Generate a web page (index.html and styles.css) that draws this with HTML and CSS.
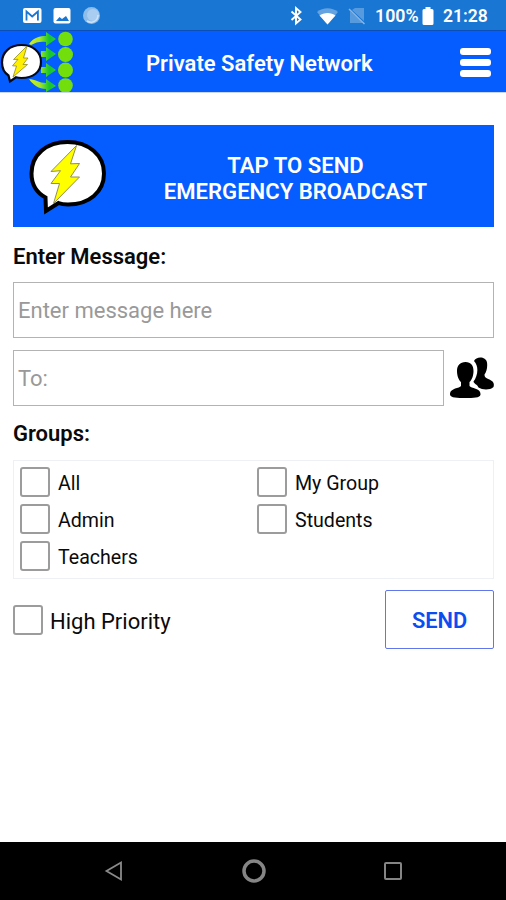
FILE: index.html
```html
<!DOCTYPE html>
<html lang="en">
<head>
<meta charset="utf-8">
<title>Private Safety Network</title>
<link rel="stylesheet" href="styles.css">
</head>
<body>
<div class="screen">
  <div class="status">
    <svg class="status-left" width="84" height="20" viewBox="0 0 84 20">
      <rect x="2" y="2" width="18.500" height="15" rx="2" fill="#fff"/>
      <path d="M5.500 14.500V5.500l5.700 5 5.700-5v9" fill="none" stroke="#1976d2" stroke-width="1.800"/>
      <rect x="32.500" y="2" width="17" height="15.500" rx="2" fill="#fff"/>
      <path d="M35 15l3.500-4 2.500 2 4-3 3 5z" fill="#1976d2"/>
      <circle cx="70.500" cy="9.500" r="8.500" fill="#8fbdea"/>
      <circle cx="72" cy="9" r="6" fill="#a9cdf0"/>
      <path d="M66 15c5 3 11 0 11-6" fill="none" stroke="#cfe3f7" stroke-width="1.500"/>
    </svg>
    <svg class="status-right" width="80" height="22" viewBox="0 0 80 22">
      <path d="M2.500 6.500l9 8-4.500 4V3l4.500 4-9 8" fill="none" stroke="#fff" stroke-width="1.900"/>
      <path d="M28 7C34 2 43 2 49 7L38.500 19.500z" fill="#64a2e0"/>
      <path d="M30.500 10.500c4-3.500 12-3.500 16 0l-8 9z" fill="#fff"/>
      <path d="M66 3h9v13L63 5zM61 6l13 12H61z" fill="#589ade"/>
      <path d="M60 4l15.500 15" stroke="#86b5e6" stroke-width="1.500"/>
    </svg>
    <span class="percent">100%</span>
    <svg class="battery" width="12" height="20" viewBox="0 0 12 20"><path d="M3.500 1h5v2H10q1.500 0 1.500 1.500v13Q11.500 19 10 19H2Q.5 19 .5 17.500v-13Q.5 3 2 3h1.500z" fill="#fff"/></svg>
    <span class="clock">21:28</span>
  </div>
  <header class="appbar">
    <svg class="logo" width="76" height="61" viewBox="0 0 76 61">
      <defs>
        <linearGradient id="arrow" gradientUnits="userSpaceOnUse" x1="29" y1="0" x2="56" y2="0"><stop offset="0" stop-color="#d2ee22"/><stop offset=".4" stop-color="#a5e52a"/><stop offset=".75" stop-color="#17c52e"/><stop offset="1" stop-color="#25cf32"/></linearGradient>
      </defs>
      <g fill="url(#arrow)">
        <path d="M29 13C34 6 40 5 46 5V1l10 7-10 7V11C41 10 36 11 31 14z"/>
        <path d="M41 20h5v-4l10 7-10 7v-4h-5z"/>
        <path d="M41 36h5v-4l10 7-10 7v-4h-5z"/>
        <path d="M29 48c6 0 10 4 17 4v-4l10 7-10 6v-3C39 58 33 54 29 48z"/>
      </g>
      <g fill="#72df0d"><circle cx="65.500" cy="8" r="7.300"/><circle cx="65.500" cy="23.500" r="7.500"/><circle cx="65.500" cy="39" r="7.500"/><circle cx="65.500" cy="54.500" r="7.300"/></g>
      <path d="M8.500 44.500C4 41.500 2 36.500 2 31.500 2 21 10 14 21.500 14S41 21 41 31 33 47 21.500 47c-2 0-4-.2-5.500-.7L10 50.500z" fill="#fff" stroke="#050a19" stroke-width="2.200"/>
      <path d="M27 15L13.500 28.500l4.500-.2-5.500 6.500 4 .2L13 46l14.500-12.500h-4.500l5-6.500h-4.500z" fill="#ffef00" stroke="#8f8a24" stroke-width=".8"/>
    </svg>
    <h1 class="title">Private Safety Network</h1>
    <div class="menu"><i></i><i></i><i></i></div>
  </header>
  <main class="content">
    <button class="broadcast">
      <svg width="80" height="78" viewBox="0 0 80 78">
        <path d="M17.500 60.500C7.500 55 3.500 46 3.500 36.500 3.500 17.500 18.500 5 39.500 5S76 18 76 36.500 61 67.500 40 67.500c-3 0-7-.5-9.500-1.500L18 74z" fill="#fff" stroke="#000" stroke-width="4"/>
        <path d="M48.500 8.500L23 34.500l9.500-.8L23 46.500h8.500L25.500 66.500 51.500 40h-9l9-13.500-9 .3z" fill="#ff0" stroke="#929052" stroke-width="1"/>
      </svg>
      <span class="broadcast-text">TAP TO SEND<br>EMERGENCY BROADCAST</span>
    </button>
    <h2 class="label label-message">Enter Message:</h2>
    <div class="field"><span>Enter message here</span></div>
    <div class="recipient">
      <div class="field to"><span>To:</span></div>
      <svg width="44" height="44" viewBox="0 0 44 44">
        <path d="M24 5C26 0 36 0 37 6.500c.7 4.500-.5 9.500-2.500 12 0 3 1.500 3.500 5 5 4 2 5 4 4 7.500-4 3.500-11 3-15 .5-1-3-5-4-5-6 4-5 6-15 .5-20.500z" fill="#000"/>
        <path d="M15.500 6c5.500 0 8 3.500 8 9 0 4.500-1.500 9-4 11v4c1.500 2.500 11.500 2 11 8.500-.5 3.500-7 3.500-15 3.500s-15 0-15.500-3.500C-.5 32 9.500 32.500 11 30v-4C8.500 24 7 19.500 7 15c0-5.500 3-9 8.500-9z" fill="#000"/>
      </svg>
    </div>
    <h2 class="label label-groups">Groups:</h2>
    <div class="groups">
      <div class="check"><i class="box"></i><span>All</span></div>
      <div class="check"><i class="box"></i><span>My Group</span></div>
      <div class="check"><i class="box"></i><span>Admin</span></div>
      <div class="check"><i class="box"></i><span>Students</span></div>
      <div class="check"><i class="box"></i><span>Teachers</span></div>
    </div>
    <div class="actions">
      <div class="check priority"><i class="box"></i><span>High Priority</span></div>
      <button class="send"><span>SEND</span></button>
    </div>
  </main>
  <nav class="navbar">
    <svg width="20" height="24" viewBox="0 0 20 24"><path d="M17 3.500v17L2.500 12z" fill="none" stroke="#8a8a8a" stroke-width="1.800"/></svg>
    <svg width="26" height="26" viewBox="0 0 26 26"><circle cx="13" cy="13" r="10" fill="none" stroke="#858585" stroke-width="3.500"/></svg>
    <svg width="20" height="20" viewBox="0 0 20 20"><rect x="2" y="2" width="16" height="16" rx="1" fill="none" stroke="#858585" stroke-width="2"/></svg>
  </nav>
</div>
</body>
</html>
```
FILE: styles.css
```css
* { box-sizing: border-box; }
body { margin: 0; background: #fff; color: #0a0a0a; font-family: Roboto, "Liberation Sans", sans-serif; }
svg { display: block; flex: none; }
h1, h2 { margin: 0; white-space: nowrap; }
button { border: 0; padding: 0; font: inherit; }
.screen { width: 506px; height: 900px; display: flex; flex-direction: column; overflow: hidden; }
.status { height: 31px; background: #1976d2; border-bottom: 1px solid #0c4eb5; display: flex; align-items: center; color: #fff; padding: 1px 18px 0 21px; font-size: 18px; font-weight: 500; }
.status-right { margin-left: 184px; }
.percent { margin-left: 6px; width: 43px; white-space: nowrap; font-size: 17.800px; }
.battery { margin-left: 4px; }
.clock { margin-left: 9px; font-size: 17.500px; }
.percent, .clock { font-weight: 600; }
.appbar { height: 61px; background: #065dff; color: #fff; display: flex; align-items: center; }
.title { margin-left: 70px; width: 228px; font-size: 22px; font-weight: 600; line-height: 30px; padding-top: 4px; }
.menu { margin: 1px 0 0 86px; width: 31px; display: grid; gap: 4px; }
.menu i { height: 7px; border-radius: 3px; background: #fff; }
.content { flex: 1; padding: 33px 12px 0 13px; border-top: 1px solid #c9d5f5; }
.broadcast { width: 481px; height: 102px; background: #065dff; color: #fff; display: flex; align-items: center; padding-left: 15px; margin-top: -1px; }
.broadcast-text { flex: 1; text-align: center; font-size: 22.100px; line-height: 26px; font-weight: 600; padding: 3px 0 0 0; margin-right: 11px; }
.label { font-size: 22px; line-height: 28px; font-weight: 600; }
.label-message { margin: 16px 0 11px; }
.field { height: 56px; border: 1px solid #b3b3b3; display: flex; align-items: center; padding-left: 4px; font-size: 22px; color: #999; }
.recipient { display: flex; align-items: center; gap: 6px; margin-top: 12px; }
.to { width: 431px; }
.label-groups { margin: 14px 0 12px; }
.groups { width: 481px; height: 119px; border: 1px solid #edf0f4; padding: 6px; display: grid; grid-template-columns: 237px 1fr; grid-auto-rows: 29px; row-gap: 8px; }
.check { display: flex; align-items: center; gap: 8px; font-size: 19.600px; }
.check span { padding-top: 4px; white-space: nowrap; }
.box { width: 30px; height: 30px; border: 2.500px solid #9c9c9c; border-radius: 3px; background: #fff; }
.actions { display: flex; justify-content: space-between; align-items: center; margin-top: 11px; }
.priority { font-size: 22px; gap: 7px; }
.priority span { padding-top: 3px; }
.send { width: 109px; height: 59px; border: 1px solid #6176ea; border-radius: 2px; background: #fff; color: #0b4df0; font-size: 21.800px; font-weight: 600; padding-top: 2px; }
.navbar { height: 58px; background: #000; display: flex; align-items: center; padding-left: 104px; }
.navbar svg:nth-child(2) { margin-left: 117px; }
.navbar svg:nth-child(3) { margin-left: 116px; }
```
